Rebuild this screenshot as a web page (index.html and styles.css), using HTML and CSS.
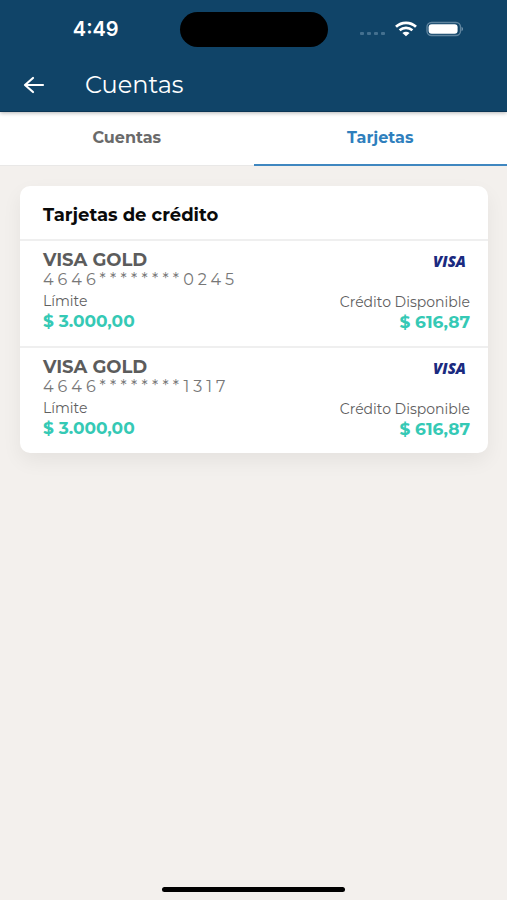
FILE: index.html
```html
<!DOCTYPE html>
<html lang="es">
<head>
    <meta charset="UTF-8">
    <meta name="viewport" content="width=device-width, initial-scale=1.0">
    <title>Cuentas</title>
    <link rel="stylesheet" href="styles.css">
</head>
<body>
    <header class="header">
        <div class="status-bar">
            <span class="time">4:49</span>
            <div class="island"></div>
            <div class="status-icons">
                <svg width="26" height="16" viewBox="0 0 26 16" fill="#44708f">
                    <rect x="0" y="11" width="4" height="3" rx="1"/>
                    <rect x="7" y="11" width="4" height="3" rx="1"/>
                    <rect x="14" y="11" width="4" height="3" rx="1"/>
                    <rect x="21" y="11" width="4" height="3" rx="1"/>
                </svg>
                <svg width="22" height="16" viewBox="0 0 22 16">
                    <path d="M1 5.8C6.6 0.6 15.4 0.6 21 5.8" fill="none" stroke="#fff" stroke-width="2.8"/>
                    <path d="M4.6 9.3C8.4 6 13.6 6 17.4 9.3" fill="none" stroke="#fff" stroke-width="2.6"/>
                    <path d="M7.4 12C9.5 10.2 12.5 10.2 14.6 12L11 15.2Z" fill="#fff"/>
                </svg>
                <svg width="38" height="16" viewBox="0 0 38 16">
                    <rect x="1" y="1.5" width="33.5" height="13" rx="4.5" fill="none" stroke="#5f849e" stroke-width="1.4"/>
                    <rect x="2.6" y="3.2" width="29" height="9.6" rx="3" fill="#fff"/>
                    <path d="M35.6 5.8C37.4 6.5 37.4 9.5 35.6 10.2Z" fill="#7f9db3"/>
                </svg>
            </div>
        </div>
        <div class="nav-bar">
            <button class="back-btn" aria-label="Volver">
                <svg width="22" height="18" viewBox="0 0 22 18" fill="none" stroke="#fff" stroke-width="2.2" stroke-linecap="round" stroke-linejoin="round">
                    <path d="M20 9H2M10 2L2 9L10 16"/>
                </svg>
            </button>
            <h1>Cuentas</h1>
        </div>
    </header>

    <nav class="tabs">
        <a href="#cuentas" class="tab">Cuentas</a>
        <a href="#tarjetas" class="tab active">Tarjetas</a>
    </nav>

    <main class="content">
        <section class="card">
            <h2>Tarjetas de crédito</h2>
            <article class="card-item">
                <div class="row">
                    <div>
                        <h3>VISA GOLD</h3>
                        <p class="number">4646********0245</p>
                    </div>
                    <span class="visa">VISA</span>
                </div>
                <div class="row">
                    <div class="amount">
                        <p class="label">Límite</p>
                        <p class="value">$ 3.000,00</p>
                    </div>
                    <div class="amount available">
                        <p class="label">Crédito Disponible</p>
                        <p class="value">$ 616,87</p>
                    </div>
                </div>
            </article>
            <article class="card-item">
                <div class="row">
                    <div>
                        <h3>VISA GOLD</h3>
                        <p class="number">4646********1317</p>
                    </div>
                    <span class="visa">VISA</span>
                </div>
                <div class="row">
                    <div class="amount">
                        <p class="label">Límite</p>
                        <p class="value">$ 3.000,00</p>
                    </div>
                    <div class="amount available">
                        <p class="label">Crédito Disponible</p>
                        <p class="value">$ 616,87</p>
                    </div>
                </div>
            </article>
        </section>
    </main>

    <footer class="home-indicator"></footer>
</body>
</html>
```
FILE: styles.css
```css
* {
    margin: 0;
    padding: 0;
    box-sizing: border-box;
}

body {
    display: flex;
    flex-direction: column;
    min-height: 100vh;
    background: #f3f0ed;
    font-family: Montserrat, 'DejaVu Sans', Verdana, sans-serif;
    color: #606060;
}

.header {
    background: #104468;
    color: white;
    border-bottom: 1px solid #0b3555;
    box-shadow: 0 1px 4px rgba(0, 0, 0, 0.3);
    z-index: 1;
}

.status-bar {
    display: grid;
    grid-template-columns: 1fr 148px 1fr;
    align-items: center;
    height: 58px;
}

.time {
    padding-left: 12px;
    text-align: center;
    font-family: Inter, sans-serif;
    font-size: 20px;
    font-weight: 600;
}

.island {
    height: 35px;
    border-radius: 18px;
    background: black;
}

.status-icons {
    display: flex;
    justify-content: flex-end;
    align-items: center;
    gap: 9px;
    padding-right: 43px;
}

.nav-bar {
    display: flex;
    align-items: center;
    gap: 40px;
    height: 53px;
    padding: 0 23px;
}

.back-btn {
    display: flex;
    border: none;
    background: none;
    cursor: pointer;
}

h1 {
    font-size: 24px;
    font-weight: 400;
}

.tabs {
    display: flex;
    background: white;
}

.tab {
    flex: 1;
    height: 54px;
    border-bottom: 1px solid #e9e8e7;
    text-align: center;
    text-decoration: none;
    font-size: 16px;
    font-weight: bold;
    line-height: 52px;
    color: #6a6a6a;
}

.tab.active {
    border-bottom: 2px solid #3f87c0;
    color: #2f7fbd;
}

.content {
    flex: 1;
    padding: 20px 19px 20px 20px;
}

.card {
    border-radius: 10px;
    background: white;
    box-shadow: 0 8px 20px rgba(0, 0, 0, 0.06);
}

h2 {
    padding: 5px 23px 0;
    font-size: 18px;
    line-height: 48px;
    color: #0a0a0a;
}

.card-item {
    display: flex;
    flex-direction: column;
    gap: 1px;
    padding: 9px 18px 14px 23px;
    border-top: 2px solid #efefef;
}

.row {
    display: flex;
    justify-content: space-between;
}

h3 {
    font-size: 18px;
    line-height: 20px;
    color: #5c5c5c;
}

.number {
    font-size: 16px;
    line-height: 20px;
    letter-spacing: 4px;
    color: #777;
}

.visa {
    padding: 0 4px;
    font-family: 'Open Sans', sans-serif;
    font-size: 15px;
    font-style: italic;
    font-weight: 800;
    line-height: 22px;
    color: #1a2a80;
}

.label {
    font-size: 14px;
    line-height: 20px;
}

.value {
    font-size: 17px;
    font-weight: bold;
    line-height: 20px;
    color: #35c9b5;
}

.available {
    padding-top: 1px;
    text-align: right;
}

.home-indicator {
    width: 36%;
    height: 5px;
    margin: 0 auto 8px;
    border-radius: 3px;
    background: black;
}
```
